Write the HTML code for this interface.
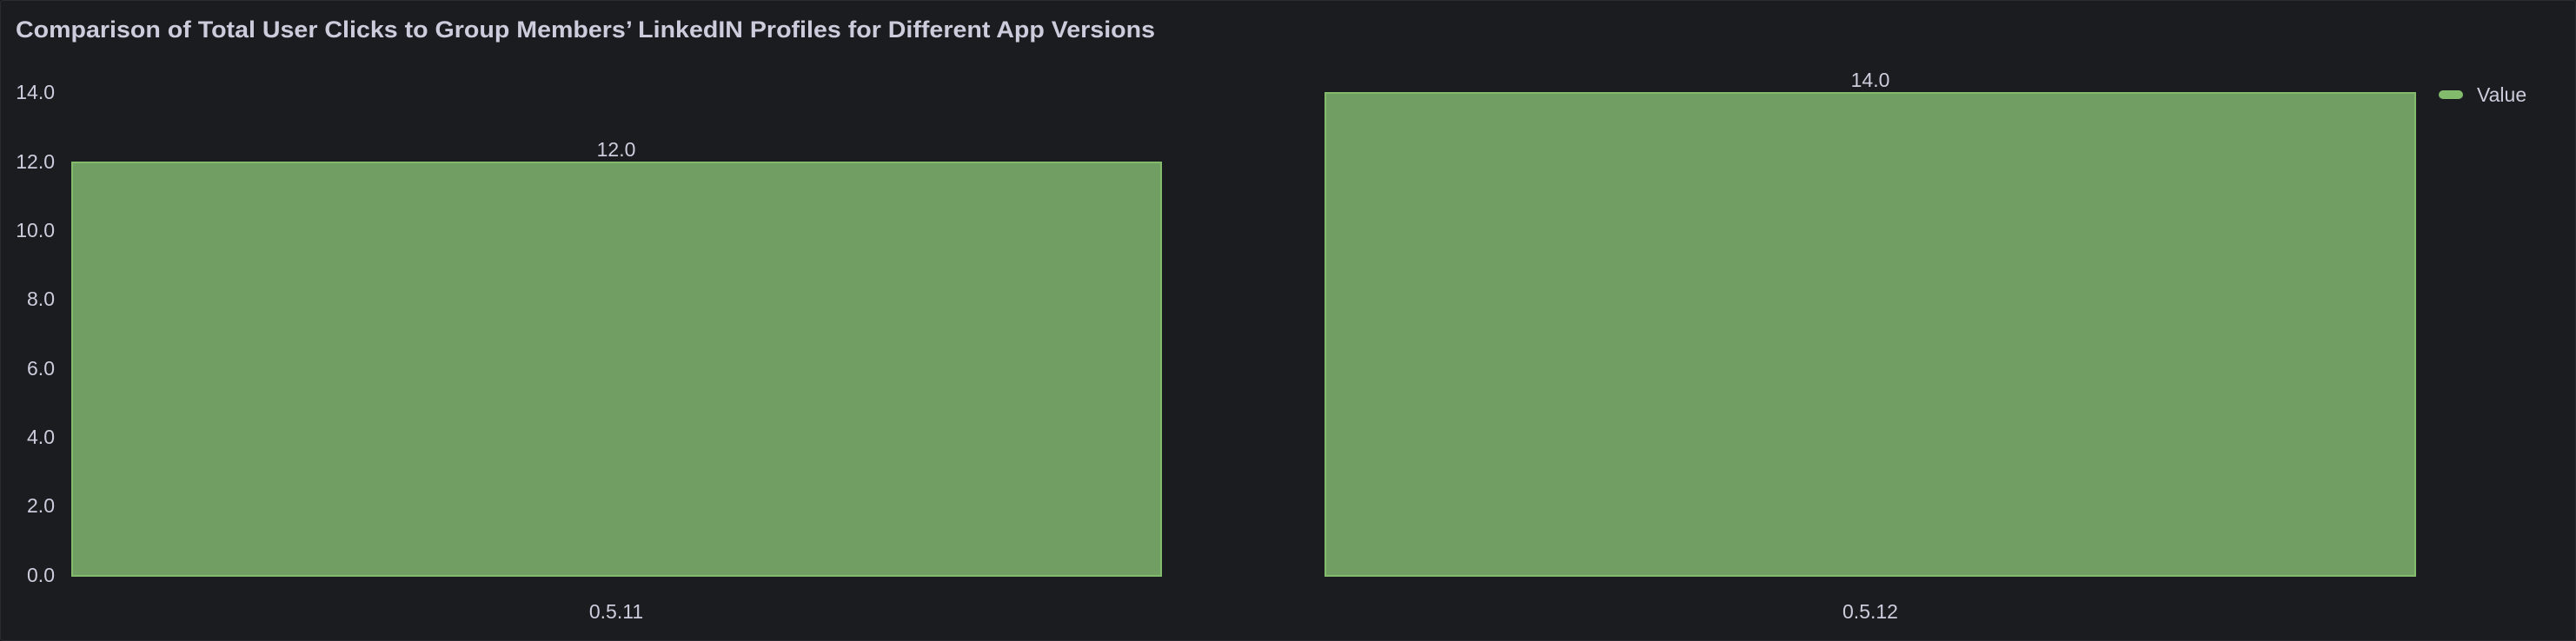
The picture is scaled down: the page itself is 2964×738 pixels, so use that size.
<!DOCTYPE html>
<html><head><meta charset="utf-8"><style>
html,body{margin:0;padding:0;background:#18191d;}
svg{display:block;}
text{font-family:"Liberation Sans",sans-serif;fill:#ccccdc;}
</style></head><body>
<svg width="2964" height="738" viewBox="0 0 2964 738">
<rect x="0.5" y="0.5" width="2963" height="737" rx="3" fill="#1b1c20" stroke="#2b2c31"/>
<text x="18" y="43" font-size="27" font-weight="bold" textLength="1311" lengthAdjust="spacingAndGlyphs">Comparison of Total User Clicks to Group Members’ LinkedIN Profiles for Different App Versions</text>
<g font-size="23" text-anchor="end">
<text x="63" y="114">14.0</text>
<text x="63" y="194">12.0</text>
<text x="63" y="273">10.0</text>
<text x="63" y="352">8.0</text>
<text x="63" y="432">6.0</text>
<text x="63" y="511">4.0</text>
<text x="63" y="590">2.0</text>
<text x="63" y="670">0.0</text>
</g>
<rect x="83" y="187" width="1253" height="476" fill="#719f63" stroke="#82bb6c" stroke-width="2"/>
<rect x="1525" y="107" width="1254" height="556" fill="#719f63" stroke="#82bb6c" stroke-width="2"/>
<g font-size="23" text-anchor="middle">
<text x="709" y="180">12.0</text>
<text x="2152" y="100">14.0</text>
<text x="709" y="712">0.5.11</text>
<text x="2152" y="712">0.5.12</text>
</g>
<rect x="2806" y="104" width="28" height="10" rx="5" fill="#82bb6c"/>
<text x="2850" y="117" font-size="23">Value</text>
</svg>
</body></html>
